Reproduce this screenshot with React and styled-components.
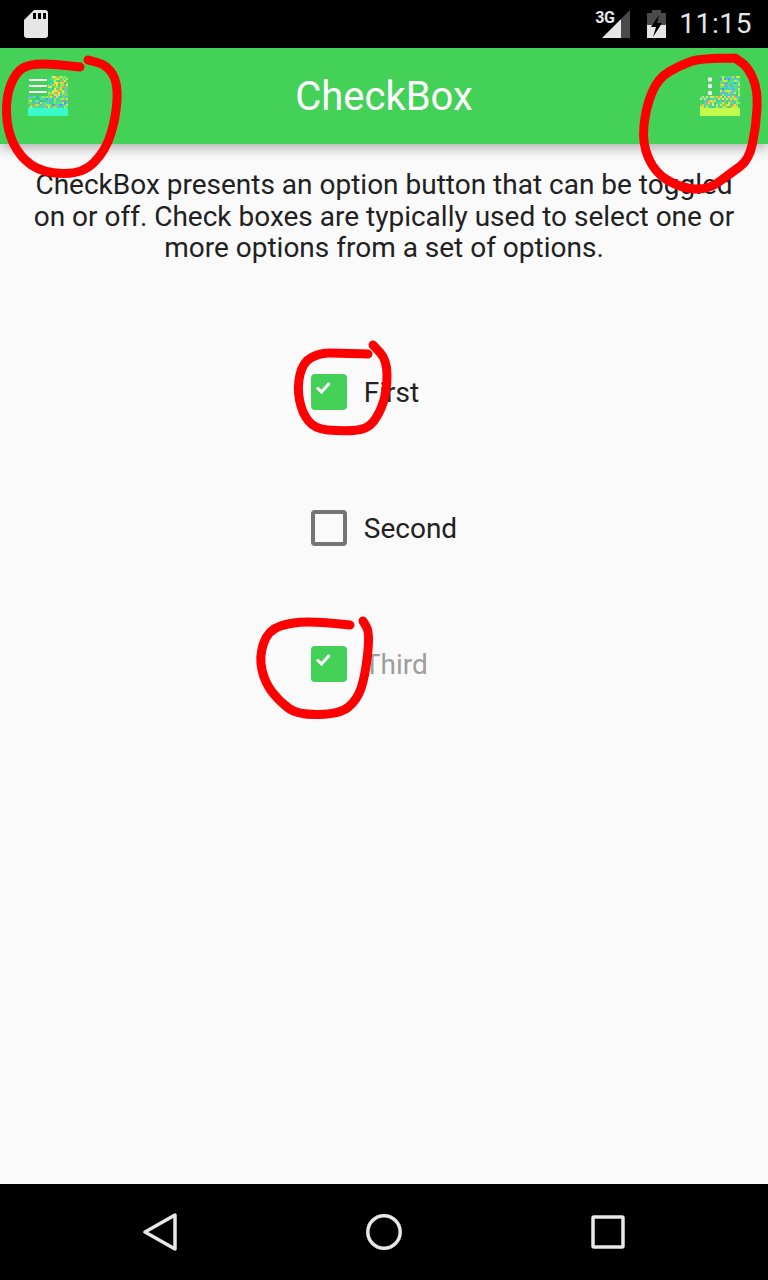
import React from 'react'
import styled, { createGlobalStyle } from 'styled-components'

const GlobalStyle = createGlobalStyle`
  html, body {
    margin: 0;
    padding: 0;
    background: #fafafa;
    font-family: Roboto, "Liberation Sans", sans-serif;
  }
`

const Page = styled.div`
  position: relative;
  width: 768px;
  height: 1280px;
  overflow: hidden;
  display: flex;
  flex-direction: column;
  background: #fafafa;
`

const StatusBar = styled.div`
  height: 48px;
  flex: none;
  background: #000;
  display: flex;
  align-items: center;
  padding: 0 16px 0 24px;
  box-sizing: border-box;
`

const StatusRight = styled.div`
  margin-left: auto;
  display: flex;
  align-items: center;
`

const Signal = styled.div`
  position: relative;
  width: 36px;
  height: 30px;
  margin-right: 16px;
`

const SignalLabel = styled.span`
  position: absolute;
  left: 0;
  top: 1px;
  font-size: 16px;
  line-height: 16px;
  font-weight: 700;
  color: #e6e6e6;
  letter-spacing: -0.5px;
`

const Clock = styled.span`
  font-size: 28px;
  line-height: 32px;
  color: #e6e6e6;
  margin-left: 12px;
  letter-spacing: 0.6px;
`

const AppBar = styled.header`
  position: relative;
  z-index: 1;
  height: 96px;
  flex: none;
  background: #43d158;
  box-shadow: 0 4px 12px rgba(0, 0, 0, 0.3);
  display: flex;
  align-items: center;
  justify-content: space-between;
  padding: 28px;
  box-sizing: border-box;
`

const Title = styled.h1`
  margin: 0;
  font-size: 40px;
  font-weight: 400;
  color: #fff;
`

const IconSlot = styled.div`
  position: relative;
  width: 40px;
  height: 40px;
`

const Content = styled.main`
  flex: 1;
  padding: 25px 32px 0;
  position: relative;
  z-index: 2;
`

const Description = styled.p`
  margin: 0;
  font-size: 28px;
  line-height: 31.5px;
  text-align: center;
  color: #212121;
`

const Options = styled.div`
  width: fit-content;
  margin: 111px auto 0;
  display: flex;
  flex-direction: column;
  gap: 100px;
`

const Option = styled.label`
  display: flex;
  align-items: center;
  gap: 17px;
  height: 36px;
  font-size: 28px;
  color: ${p => (p.$disabled ? '#9e9e9e' : '#212121')};
`

const Box = styled.span`
  width: 36px;
  height: 36px;
  margin-bottom: 2px;
  box-sizing: border-box;
  border-radius: 4px;
  display: block;
  background: ${p => (p.$checked ? '#43d158' : 'transparent')};
  border: ${p => (p.$checked ? 'none' : '4px solid #757575')};
`

const NavBar = styled.nav`
  height: 96px;
  flex: none;
  background: #000;
  display: flex;
  align-items: center;
  justify-content: space-between;
  padding: 0 143px;
  position: relative;
  z-index: 2;
`

const Scribbles = styled.svg`
  position: absolute;
  left: 0;
  top: 0;
  z-index: 3;
  pointer-events: none;
`

// pseudo random so the garbled icon tiles stay the same on each render
const yellowish = ['#e6e94a', '#7ee04f', '#33d96a', '#c8f03c', '#3fd6a8', '#f0d84a', '#58c8c8', '#9be85a', '#e8a050', '#4ce08a']
const bluish = ['#3fd6a8', '#55c0e0', '#7ee04f', '#33d96a', '#4f9fd8', '#c8f03c', '#30e0c0', '#9be85a', '#b090c8', '#4ce08a']

function noiseRects(x, y, w, h, seed, colors) {
  const rects = []
  let s = seed
  for (let j = 0; j < h; j += 2) {
    for (let i = 0; i < w; i += 2) {
      s = Math.imul(s ^ (s >>> 15), 2246822519) + 3266489917 | 0
      s ^= s >>> 13
      rects.push(<rect key={`${x}-${i}-${j}`} x={x + i} y={y + j} width="2" height="2" fill={colors[(s >>> 8) % colors.length]} />)
    }
  }
  return rects
}

function MenuIcon() {
  return (
    <svg width="40" height="40" viewBox="0 0 40 40">
      {noiseRects(20, 0, 20, 20, 7, yellowish)}
      {noiseRects(0, 20, 40, 12, 19, bluish)}
      <rect x="0" y="32" width="40" height="8" fill="#3cfbcb" />
      <rect x="1" y="3" width="18" height="2" fill="#fff" />
      <rect x="1" y="9" width="18" height="2" fill="#fff" />
      <rect x="1" y="15" width="18" height="2" fill="#fff" />
    </svg>
  )
}

function MoreIcon() {
  return (
    <svg width="40" height="40" viewBox="0 0 40 40">
      {noiseRects(20, 0, 20, 20, 31, bluish)}
      {noiseRects(0, 20, 40, 12, 53, yellowish)}
      <rect x="0" y="32" width="40" height="8" fill="#c4fb4f" />
      <circle cx="10" cy="3.5" r="2.2" fill="#fff" />
      <circle cx="10" cy="10" r="2.2" fill="#fff" />
      <circle cx="10" cy="17" r="2.2" fill="#fff" />
    </svg>
  )
}

function CheckMark() {
  return (
    <svg width="36" height="36" viewBox="0 0 36 36" style={{ display: 'block' }}>
      <path d="M6 13.5 L10.5 18 L18.5 9" fill="none" stroke="#fff" strokeWidth="3" />
    </svg>
  )
}

// smooth line through the midpoints, a hand drawn marker look
function toPath(points) {
  let d = `M${points[0][0]} ${points[0][1]}`
  for (let i = 1; i < points.length - 1; i++) {
    const mx = (points[i][0] + points[i + 1][0]) / 2
    const my = (points[i][1] + points[i + 1][1]) / 2
    d += ` Q${points[i][0]} ${points[i][1]} ${mx} ${my}`
  }
  const last = points[points.length - 1]
  return `${d} L${last[0]} ${last[1]}`
}

const scribbleLines = [
  [[80, 67], [55, 64], [30, 64], [16, 72], [6, 96], [7, 130], [20, 157], [43, 173], [83, 174], [106, 150], [116, 117], [118, 83], [107, 65], [88, 60]],
  [[735, 58], [701, 58], [681, 65], [658, 78], [646, 107], [642, 143], [655, 173], [681, 188], [708, 190], [731, 173], [749, 160], [756, 127], [758, 90], [748, 67], [735, 58]],
  [[368, 354], [340, 353], [320, 353], [303, 362], [297, 387], [302, 413], [315, 429], [340, 431], [367, 430], [380, 413], [387, 390], [387, 360], [373, 345]],
  [[350, 625], [323, 622], [293, 622], [268, 630], [259, 657], [265, 683], [280, 702], [298, 715], [340, 714], [357, 700], [365, 677], [370, 633], [363, 621]],
]

export default function App() {
  return (
    <Page>
      <GlobalStyle />
      <StatusBar>
        <svg width="24" height="28" viewBox="0 0 24 28">
          <path d="M10 0 H21 Q24 0 24 3 V25 Q24 28 21 28 H3 Q0 28 0 25 V10 Z" fill="#e6e6e6" />
          <rect x="9" y="3" width="3" height="6" fill="#000" />
          <rect x="14" y="3" width="3" height="6" fill="#000" />
          <rect x="19" y="3" width="3" height="6" fill="#000" />
        </svg>
        <StatusRight>
          <Signal>
            <SignalLabel>3G</SignalLabel>
            <svg width="36" height="30" viewBox="0 0 36 30">
              <path d="M7 29 L26 10 V29 Z" fill="#e6e6e6" />
              <path d="M26 10 L35 1 V29 H26 Z" fill="#4a4a4a" />
            </svg>
          </Signal>
          <svg width="20" height="29" viewBox="0 0 20 29">
            <path d="M5 0 H14 V3 H19 V28 H0 V3 H5 Z" fill="#4a4a4a" />
            <path d="M0 15 H19 V28 H0 Z" fill="#e6e6e6" />
            <path d="M12 5 L4 17 H9 L6 27 L15 13 H10 Z" fill="#000" />
          </svg>
          <Clock>11:15</Clock>
        </StatusRight>
      </StatusBar>

      <AppBar>
        <IconSlot><MenuIcon /></IconSlot>
        <Title>CheckBox</Title>
        <IconSlot><MoreIcon /></IconSlot>
      </AppBar>

      <Content>
        <Description>
          CheckBox presents an option button that can be toggled on or off. Check boxes are typically used to select one or more options from a set of options.
        </Description>
        <Options>
          <Option>
            <Box $checked><CheckMark /></Box>
            First
          </Option>
          <Option>
            <Box />
            Second
          </Option>
          <Option $disabled>
            <Box $checked><CheckMark /></Box>
            Third
          </Option>
        </Options>
      </Content>

      <NavBar>
        <svg width="34" height="38" viewBox="0 0 34 38">
          <path d="M2 19 L32 2 V36 Z" fill="none" stroke="#e8e8e8" strokeWidth="3.5" strokeLinejoin="round" />
        </svg>
        <svg width="36" height="36" viewBox="0 0 36 36">
          <circle cx="18" cy="18" r="16.2" fill="none" stroke="#e8e8e8" strokeWidth="3.5" />
        </svg>
        <svg width="34" height="34" viewBox="0 0 34 34">
          <rect x="2" y="2" width="30" height="30" rx="1" fill="none" stroke="#e8e8e8" strokeWidth="3.5" />
        </svg>
      </NavBar>

      <Scribbles width="768" height="1280" viewBox="0 0 768 1280">
        {scribbleLines.map((pts, i) => (
          <path key={i} d={toPath(pts)} fill="none" stroke="#ff0000" strokeWidth="9" strokeLinecap="round" strokeLinejoin="round" />
        ))}
      </Scribbles>
    </Page>
  )
}
